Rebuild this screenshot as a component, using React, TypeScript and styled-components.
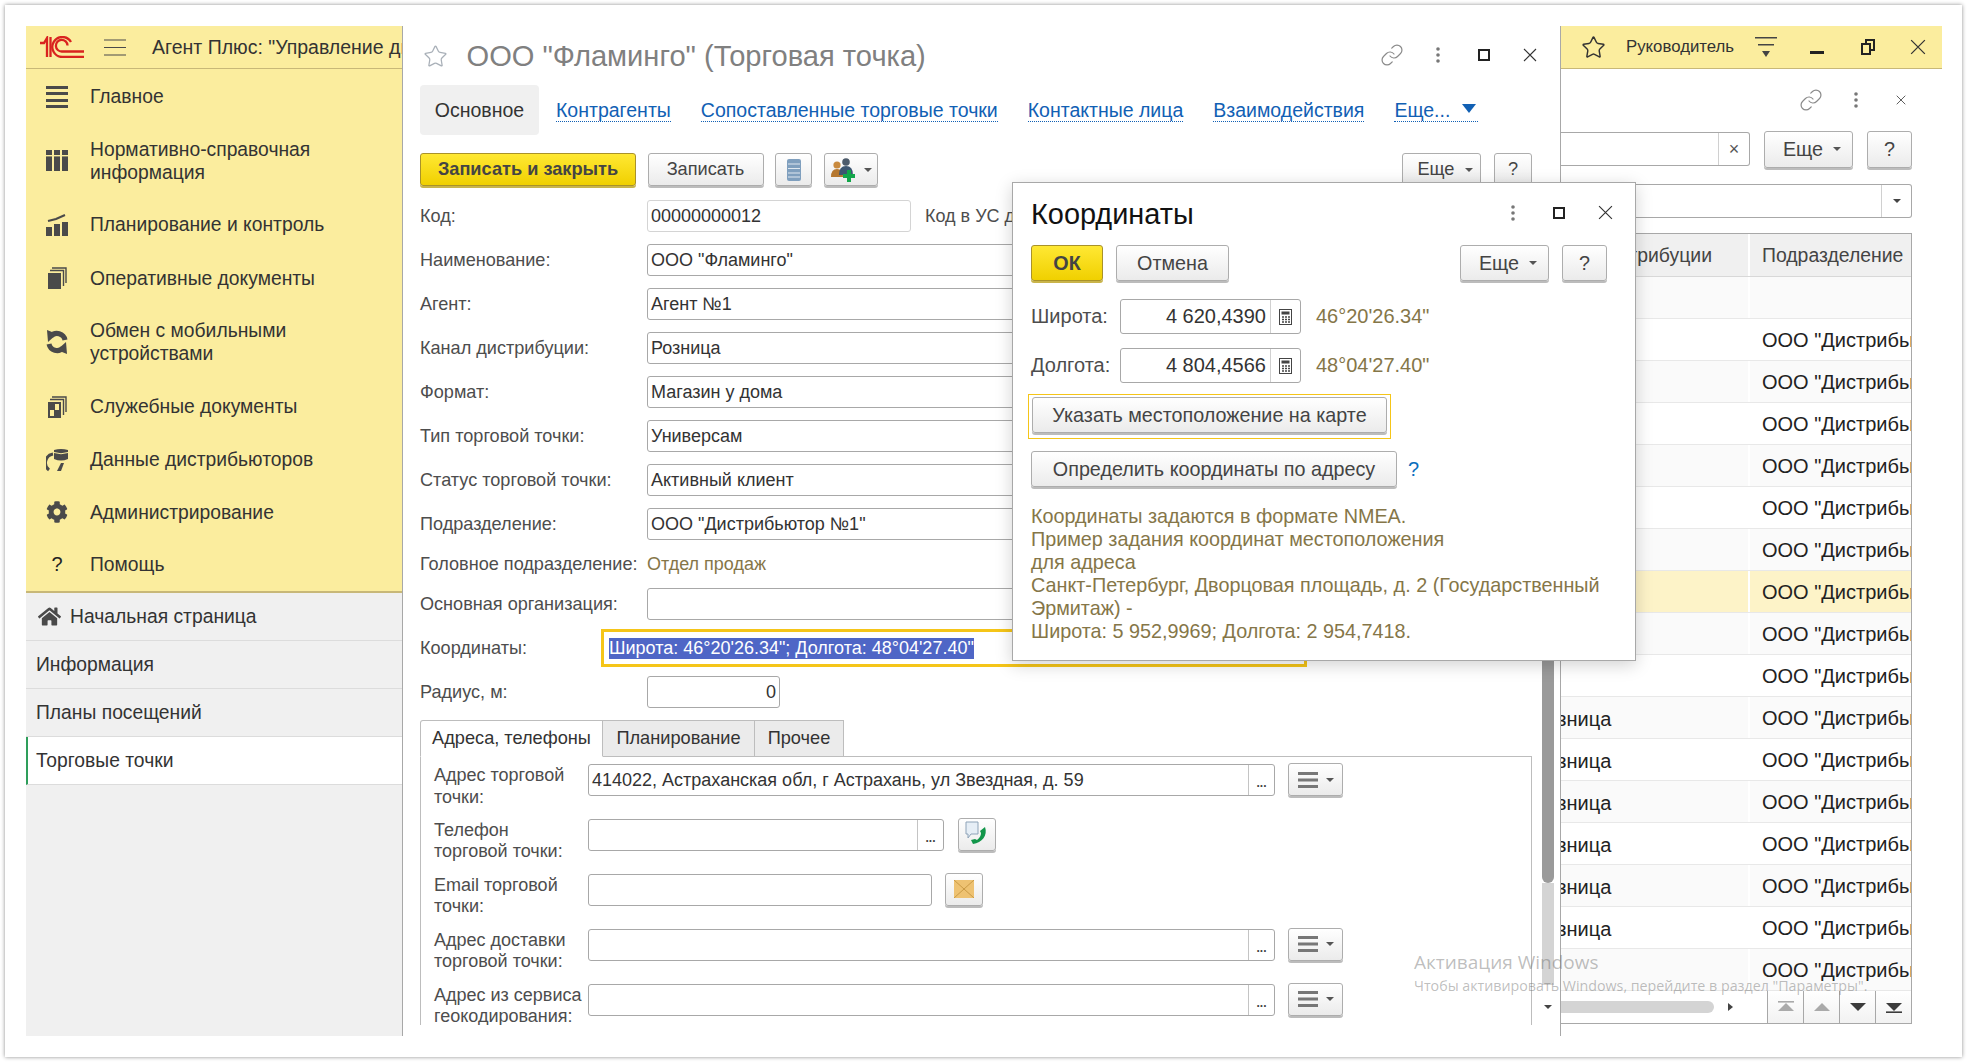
import React from 'react';
import styled, { createGlobalStyle } from 'styled-components';
import { Star, Link } from 'lucide-react';
import { FaHome, FaCog } from 'react-icons/fa';

const GlobalStyle = createGlobalStyle`
    html, body {
        margin: 0;
        padding: 0;
        background: #fff;
    }
    body {
        width: 1967px;
        height: 1063px;
        overflow: hidden;
        font-family: "Liberation Sans", Arial, sans-serif;
        font-size: 18px;
        color: #333;
    }
    * {
        box-sizing: border-box;
    }
`;

const menu = [
    { title: ['Главное'], icon: 'main' },
    { title: ['Нормативно-справочная', 'информация'], icon: 'refs' },
    { title: ['Планирование и контроль'], icon: 'plan' },
    { title: ['Оперативные документы'], icon: 'docs' },
    { title: ['Обмен с мобильными', 'устройствами'], icon: 'sync' },
    { title: ['Служебные документы'], icon: 'service' },
    { title: ['Данные дистрибьюторов'], icon: 'dist' },
    { title: ['Администрирование'], icon: 'gear' },
    { title: ['Помощь'], icon: 'help' },
];

const MenuIcon = ({ name }: { name: string }) => {
    if (name === 'gear') return <FaCog size={22} color="#4a4a4a" />;
    if (name === 'help') return <HelpMark>?</HelpMark>;
    return (
        <svg width="22" height="24" viewBox="0 0 22 24" fill="#4a4a4a">
            {name === 'main' && (
                <>
                    <rect x="0" y="1" width="22" height="3" />
                    <rect x="0" y="7" width="22" height="3" />
                    <rect x="0" y="14" width="22" height="3" />
                    <rect x="0" y="20" width="22" height="3" />
                </>
            )}
            {name === 'refs' && (
                <>
                    <rect x="0" y="1" width="6" height="21" />
                    <rect x="8" y="1" width="6" height="21" />
                    <rect x="16" y="1" width="6" height="21" />
                    <rect x="0" y="6" width="22" height="1.4" fill="#fbed9e" />
                </>
            )}
            {name === 'plan' && (
                <>
                    <rect x="0" y="14" width="6" height="9" />
                    <rect x="8" y="11" width="6" height="12" />
                    <rect x="16" y="9" width="6" height="14" />
                    <path d="M2 8 L10 6 L19 2" stroke="#4a4a4a" strokeWidth="2" fill="none" />
                </>
            )}
            {name === 'docs' && (
                <>
                    <path d="M6 2 H20 V17" stroke="#4a4a4a" strokeWidth="1.4" fill="none" />
                    <path d="M4 4.5 H17.5 V20" stroke="#4a4a4a" strokeWidth="1.4" fill="none" />
                    <rect x="2" y="7" width="13" height="16" />
                </>
            )}
            {name === 'sync' && (
                <>
                    <path d="M19 10 A8.2 8.2 0 0 0 5 6 M3 14 A8.2 8.2 0 0 0 17 18" stroke="#4a4a4a" strokeWidth="5" fill="none" />
                    <path d="M1 0 L11 4 L2 12 Z M21 24 L11 20 L20 12 Z" />
                </>
            )}
            {name === 'service' && (
                <>
                    <path d="M6 2 H20 V17" stroke="#4a4a4a" strokeWidth="1.4" fill="none" />
                    <path d="M4 4.5 H17.5 V20" stroke="#4a4a4a" strokeWidth="1.4" fill="none" />
                    <rect x="2" y="7" width="13" height="16" />
                    <rect x="9" y="9" width="4" height="6" fill="#fbed9e" />
                    <rect x="4" y="15" width="4" height="6" fill="#fbed9e" />
                </>
            )}
            {name === 'dist' && (
                <>
                    <path d="M7 6 A9 9 0 0 0 3 22" stroke="#4a4a4a" strokeWidth="3" fill="none" />
                    <path d="M8 2 Q15 0 22 2 V11 Q15 14 8 11 Z" />
                    <path d="M8 4.5 Q15 7 22 4.5" stroke="#fbed9e" strokeWidth="1" fill="none" />
                    <path d="M11 23 L15 15 L18 15 L15 23 Z" />
                </>
            )}
        </svg>
    );
};

const Logo = () => (
    <svg width="44" height="22" viewBox="0 0 44 22" fill="none" stroke="#d9231f" strokeWidth="2.3">
        <path d="M0 7 H4 L7 2 V21" />
        <path d="M10.5 1 V21" />
        <path d="M31 6 A10 10 0 1 0 22 21 H44" />
        <path d="M27.5 9.5 A5.8 5.8 0 1 0 22 15.5 H44" />
    </svg>
);

const Burger = () => (
    <svg width="22" height="17" viewBox="0 0 22 17" stroke="#4a4a4a" strokeWidth="1.2">
        <path d="M0 1 H22 M0 8.5 H22 M0 16 H22" />
    </svg>
);

const Cross = ({ size = 14 }: { size?: number }) => (
    <svg width={size} height={size} viewBox="0 0 14 14" stroke="#333" strokeWidth="1.1">
        <path d="M1 1 L13 13 M13 1 L1 13" />
    </svg>
);

const Maximize = () => (
    <svg width="12" height="12" viewBox="0 0 12 12" fill="none" stroke="#222" strokeWidth="2">
        <rect x="1" y="1" width="10" height="10" />
    </svg>
);

const Kebab = () => (
    <svg width="4" height="16" viewBox="0 0 4 16" fill="#777">
        <circle cx="2" cy="2" r="1.8" />
        <circle cx="2" cy="8" r="1.8" />
        <circle cx="2" cy="14" r="1.8" />
    </svg>
);

const Calc = () => (
    <svg width="13" height="16" viewBox="0 0 13 16">
        <rect x="0.5" y="0.5" width="12" height="15" fill="#fff" stroke="#444" />
        <rect x="2.5" y="2.5" width="8" height="3" fill="#444" />
        <path d="M3 8 H5 M6 8 H8 M9 8 H11 M3 10.5 H5 M6 10.5 H8 M9 10.5 H11 M3 13 H5 M6 13 H8 M9 13 H11" stroke="#444" strokeWidth="1.4" />
    </svg>
);

const ListLines = () => (
    <svg width="20" height="16" viewBox="0 0 20 16" fill="#777">
        <rect x="0" y="0" width="20" height="3" />
        <rect x="0" y="6.5" width="20" height="3" />
        <rect x="0" y="13" width="20" height="3" />
    </svg>
);

const Arrow = styled.span<{ $color?: string }>`
    display: inline-block;
    width: 0;
    height: 0;
    border-left: 4px solid transparent;
    border-right: 4px solid transparent;
    border-top: 4px solid ${p => p.$color || '#555'};
`;

const MoreArrow = styled(Arrow)`
    margin: 0 -7px 0 2px;
`;

const DbIcon = () => (
    <svg width="14" height="22" viewBox="0 0 14 22">
        <rect x="0" y="0" width="14" height="22" rx="2" fill="#7f9fbe" />
        <path d="M1 5 H13 M1 9.5 H13 M1 14 H13 M1 18 H13" stroke="#dfe8f0" strokeWidth="1.2" />
    </svg>
);

const PeopleIcon = () => (
    <svg width="26" height="26" viewBox="0 0 26 26">
        <circle cx="7" cy="8" r="3.6" fill="#c98a3e" />
        <path d="M1 20 Q1 12 7 12 Q13 12 13 20 Z" fill="#b5772f" />
        <circle cx="16" cy="5" r="3.8" fill="#4d5b6b" />
        <path d="M9 18 Q9 9 16 9 Q23 9 23 18 Z" fill="#3d5671" />
        <path d="M17 13 H21 V17 H25 V21 H21 V25 H17 V21 H13 V17 H17 Z" fill="#12a74a" />
    </svg>
);

const PhoneIcon = () => (
    <svg width="26" height="26" viewBox="0 0 26 26">
        <path d="M2 1 H14 V13 H7 L4 17 V13 H2 Z" fill="#e6eef6" stroke="#8ea3b8" />
        <path d="M21 6 C24 14 18 22 9 23 L7 19 L11 18 L13 19 C16 17 17 14 17 12 L16 10 Z" fill="#12964a" />
    </svg>
);

const MailIcon = () => (
    <svg width="20" height="18" viewBox="0 0 20 18">
        <rect x="0" y="0" width="20" height="18" fill="#eec272" />
        <path d="M0 0 L10 9 L20 0 M0 18 L10 9 L20 18" stroke="#c99a45" fill="none" />
    </svg>
);

const NavIcon = ({ up, bar, color }: { up?: boolean; bar?: boolean; color: string }) => (
    <svg width="16" height="12" viewBox="0 0 16 12" fill={color}>
        {up ? <path d="M8 2 L16 10 H0 Z" /> : <path d="M8 10 L0 2 H16 Z" />}
        {bar && (up ? <rect x="0" y="0" width="16" height="1.6" /> : <rect x="0" y="10.4" width="16" height="1.6" />)}
    </svg>
);

const fields = [
    { label: 'Наименование:', value: 'ООО "Фламинго"' },
    { label: 'Агент:', value: 'Агент №1' },
    { label: 'Канал дистрибуции:', value: 'Розница' },
    { label: 'Формат:', value: 'Магазин у дома' },
    { label: 'Тип торговой точки:', value: 'Универсам' },
    { label: 'Статус торговой точки:', value: 'Активный клиент' },
    { label: 'Подразделение:', value: 'ООО "Дистрибьютор №1"' },
];

const addressRows = [
    { label: ['Адрес торговой', 'точки:'], value: '414022, Астраханская обл, г Астрахань, ул Звездная, д. 59', width: 687, pick: true, kind: 'menu' },
    { label: ['Телефон', 'торговой точки:'], value: '', width: 356, pick: true, kind: 'phone' },
    { label: ['Email торговой', 'точки:'], value: '', width: 344, pick: false, kind: 'mail' },
    { label: ['Адрес доставки', 'торговой точки:'], value: '', width: 687, pick: true, kind: 'menu' },
    { label: ['Адрес из сервиса', 'геокодирования:'], value: '', width: 687, pick: true, kind: 'menu' },
];

const tableRows = Array.from({ length: 17 }, (_, i) => ({
    channel: i >= 10 && i <= 15 ? 'Розница' : '',
    unit: i === 0 ? '' : 'ООО "Дистрибьютор №1"',
    current: i === 7,
}));

export default function App() {
    return (
        <>
            <GlobalStyle />
            <Card>
                <Screen>
                    <Sidebar>
                        <SideHeader>
                            <LogoSlot><Logo /></LogoSlot>
                            <BurgerSlot><Burger /></BurgerSlot>
                            <AppTitle>Агент Плюс: "Управление дистрибуцией"</AppTitle>
                        </SideHeader>
                        <Menu>
                            {menu.map(item => (
                                <MenuItem key={item.icon}>
                                    <MenuGlyph><MenuIcon name={item.icon} /></MenuGlyph>
                                    <div>
                                        {item.title.map(line => <div key={line}>{line}</div>)}
                                    </div>
                                </MenuItem>
                            ))}
                        </Menu>
                        <OpenList>
                            <OpenItem><FaHome size={23} color="#4a4a4a" /><span>Начальная страница</span></OpenItem>
                            <OpenItem>Информация</OpenItem>
                            <OpenItem>Планы посещений</OpenItem>
                            <OpenItem $active>Торговые точки</OpenItem>
                        </OpenList>
                    </Sidebar>

                    <FormWindow>
                        <FormMain>
                            <TitleRow>
                                <StarSlot><Star size={25} color="#a9b0b8" strokeWidth={1.2} /></StarSlot>
                                <FormTitle>ООО "Фламинго" (Торговая точка)</FormTitle>
                                <TitleTools>
                                    <ToolSlot><Link size={24} color="#8a8a8a" strokeWidth={1.2} /></ToolSlot>
                                    <ToolSlot><Kebab /></ToolSlot>
                                    <ToolSlot><Maximize /></ToolSlot>
                                    <ToolSlot><Cross /></ToolSlot>
                                </TitleTools>
                            </TitleRow>

                            <TabsRow>
                                <CurrentTab>Основное</CurrentTab>
                                <TabLink>Контрагенты</TabLink>
                                <TabLink>Сопоставленные торговые точки</TabLink>
                                <TabLink>Контактные лица</TabLink>
                                <TabLink>Взаимодействия</TabLink>
                                <TabLink $more>Еще...<TabArrow /></TabLink>
                            </TabsRow>

                            <Toolbar>
                                <Btn $primary $w={216} $h={33}>Записать и закрыть</Btn>
                                <Btn $w={116} $h={33}>Записать</Btn>
                                <Btn $w={37} $h={33}><DbIcon /></Btn>
                                <Btn $w={54} $h={33}><PeopleIcon /><Arrow /></Btn>
                                <RightTools>
                                    <Btn $w={79} $h={33}>Еще<MoreArrow /></Btn>
                                    <Btn $w={38} $h={33}>?</Btn>
                                </RightTools>
                            </Toolbar>

                            <Fields>
                                <FieldRow>
                                    <FieldLabel>Код:</FieldLabel>
                                    <Input $w={264} $light>00000000012</Input>
                                    <SideCaption>Код в УС дистрибьютора:</SideCaption>
                                </FieldRow>
                                {fields.map(f => (
                                    <FieldRow key={f.label}>
                                        <FieldLabel>{f.label}</FieldLabel>
                                        <Input $w={760}>{f.value}</Input>
                                    </FieldRow>
                                ))}
                                <TextRow>
                                    <FieldLabel>Головное подразделение:</FieldLabel>
                                    <ReadValue>Отдел продаж</ReadValue>
                                </TextRow>
                                <FieldRow>
                                    <FieldLabel>Основная организация:</FieldLabel>
                                    <Input $w={760} />
                                </FieldRow>
                                <CoordRow>
                                    <FieldLabel $w={181}>Координаты:</FieldLabel>
                                    <FocusBox><Selected>Широта: 46°20'26.34"; Долгота: 48°04'27.40"</Selected></FocusBox>
                                </CoordRow>
                                <FieldRow>
                                    <FieldLabel>Радиус, м:</FieldLabel>
                                    <Input $w={133} $right>0</Input>
                                </FieldRow>
                            </Fields>

                            <TabPanel>
                                <PanelTabs>
                                    <PanelTab $active $w={183}>Адреса, телефоны</PanelTab>
                                    <PanelTab $w={152}>Планирование</PanelTab>
                                    <PanelTab $w={89}>Прочее</PanelTab>
                                    <PanelFill />
                                </PanelTabs>
                                <PanelBody>
                                    {addressRows.map(row => (
                                        <AddrRow key={row.label[0]}>
                                            <AddrLabel>
                                                {row.label.map(line => <div key={line}>{line}</div>)}
                                            </AddrLabel>
                                            <Input $w={row.width}>
                                                <InputText>{row.value}</InputText>
                                                {row.pick && <PickBtn>...</PickBtn>}
                                            </Input>
                                            {row.kind === 'menu' && <Btn $w={55} $h={33} $ml={13}><ListLines /><Arrow /></Btn>}
                                            {row.kind === 'phone' && <Btn $w={38} $h={33} $ml={14}><PhoneIcon /></Btn>}
                                            {row.kind === 'mail' && <Btn $w={38} $h={33} $ml={13}><MailIcon /></Btn>}
                                        </AddrRow>
                                    ))}
                                </PanelBody>
                            </TabPanel>
                        </FormMain>
                        <ScrollCol>
                            <ScrollThumb />
                            <ScrollTrack />
                            <ScrollEnd><Arrow $color="#444" /></ScrollEnd>
                        </ScrollCol>
                    </FormWindow>

                    <ListPane>
                        <ListHeader>
                            <HeaderStar><Star size={25} color="#333" strokeWidth={1.4} /></HeaderStar>
                            <UserName>Руководитель</UserName>
                            <FilterSlot>
                                <svg width="22" height="22" viewBox="0 0 22 22" fill="#444">
                                    <path d="M0 1 H22 V2.4 H0 Z M3 8 H19 V9.4 H3 Z" />
                                    <path d="M7 15 H15 L11 21 Z" />
                                </svg>
                            </FilterSlot>
                            <WinSlot $w={46.5}>
                                <svg width="14" height="14" viewBox="0 0 14 14" fill="#222"><rect x="0" y="11" width="14" height="3" /></svg>
                            </WinSlot>
                            <WinSlot $w={51}>
                                <svg width="14" height="16" viewBox="0 0 14 16" fill="none" stroke="#222" strokeWidth="2">
                                    <rect x="1" y="5" width="8" height="10" />
                                    <path d="M5 4 V1 H13 V11 H10" />
                                </svg>
                            </WinSlot>
                            <WinSlot $w={51.5}><Cross size={16} /></WinSlot>
                        </ListHeader>
                        <ListBody>
                            <ListTools>
                                <ToolSlot><Link size={24} color="#8a8a8a" strokeWidth={1.2} /></ToolSlot>
                                <ToolSlot><Kebab /></ToolSlot>
                                <ToolSlot><Cross size={10} /></ToolSlot>
                            </ListTools>
                            <SearchRow>
                                <SearchBox><ClearBtn>×</ClearBtn></SearchBox>
                                <Btn $w={89} $h={37} $big>Еще<MoreArrow /></Btn>
                                <Btn $w={45} $h={37} $big>?</Btn>
                            </SearchRow>
                            <ComboBox><ComboBtn><Arrow $color="#444" /></ComboBtn></ComboBox>
                            <Table>
                                <TableHead>
                                    <HeadCell $end>Канал дистрибуции</HeadCell>
                                    <HeadCell>Подразделение</HeadCell>
                                </TableHead>
                                {tableRows.map((r, i) => (
                                    <TableRow key={i} $odd={i % 2 === 0} $current={r.current}>
                                        <ChannelCell>{r.channel}</ChannelCell>
                                        <UnitCell>{r.unit}</UnitCell>
                                    </TableRow>
                                ))}
                                <TableFoot>
                                    <HScroll>
                                        <HThumb />
                                        <HArrow />
                                    </HScroll>
                                    <NavBtn><NavIcon up bar color="#aaa" /></NavBtn>
                                    <NavBtn><NavIcon up color="#aaa" /></NavBtn>
                                    <NavBtn><NavIcon color="#3c3c3c" /></NavBtn>
                                    <NavBtn><NavIcon bar color="#3c3c3c" /></NavBtn>
                                </TableFoot>
                            </Table>
                        </ListBody>
                    </ListPane>

                    <Dialog>
                        <DialogHead>
                            <DialogTitle>Координаты</DialogTitle>
                            <TitleTools>
                                <ToolSlot><Kebab /></ToolSlot>
                                <ToolSlot><Maximize /></ToolSlot>
                                <ToolSlot><Cross size={15} /></ToolSlot>
                            </TitleTools>
                        </DialogHead>
                        <DialogButtons>
                            <Btn $primary $w={72} $h={36} $big>ОК</Btn>
                            <Btn $w={113} $h={36} $big>Отмена</Btn>
                            <RightTools>
                                <Btn $w={89} $h={36} $big>Еще<MoreArrow /></Btn>
                                <Btn $w={45} $h={36} $big>?</Btn>
                            </RightTools>
                        </DialogButtons>
                        <GeoRow>
                            <GeoLabel>Широта:</GeoLabel>
                            <GeoInput>
                                <GeoValue>4 620,4390</GeoValue>
                                <CalcBtn><Calc /></CalcBtn>
                            </GeoInput>
                            <GeoHint>46°20'26.34"</GeoHint>
                        </GeoRow>
                        <GeoRow>
                            <GeoLabel>Долгота:</GeoLabel>
                            <GeoInput>
                                <GeoValue>4 804,4566</GeoValue>
                                <CalcBtn><Calc /></CalcBtn>
                            </GeoInput>
                            <GeoHint>48°04'27.40"</GeoHint>
                        </GeoRow>
                        <FocusFrame>
                            <Btn $w={355} $h={36} $big>Указать местоположение на карте</Btn>
                        </FocusFrame>
                        <AddressRow>
                            <Btn $w={366} $h={36} $big>Определить координаты по адресу</Btn>
                            <BlueHelp>?</BlueHelp>
                        </AddressRow>
                        <Info>
                            Координаты задаются в формате NMEA.<br />
                            Пример задания координат местоположения<br />
                            для адреса<br />
                            Санкт-Петербург, Дворцовая площадь, д. 2 (Государственный<br />
                            Эрмитаж) -<br />
                            Широта: 5 952,9969; Долгота: 2 954,7418.
                        </Info>
                    </Dialog>

                    <Watermark>
                        <WatermarkTitle>Активация Windows</WatermarkTitle>
                        <WatermarkText>Чтобы активировать Windows, перейдите в раздел "Параметры".</WatermarkText>
                    </Watermark>
                </Screen>
            </Card>
        </>
    );
}

const Card = styled.div`
    width: 1957px;
    height: 1052px;
    margin: 5px 0 0 5px;
    padding: 21px;
    background: #fff;
    box-shadow: 0 0 4px rgba(0, 0, 0, 0.45);
`;

const Screen = styled.div`
    position: relative;
    display: flex;
    width: 1916px;
    height: 1010px;
    overflow: hidden;
`;

const Sidebar = styled.aside`
    display: flex;
    flex-direction: column;
    flex: 0 0 376px;
    min-width: 0;
    overflow: hidden;
    background: #f0f0f0;
`;

const SideHeader = styled.div`
    display: flex;
    align-items: center;
    height: 43px;
    flex: none;
    padding-left: 14px;
    background: #fbed9e;
    border-bottom: 1px solid #c8b878;
    overflow: hidden;
    white-space: nowrap;
`;

const LogoSlot = styled.div`
    display: flex;
    flex: none;
`;

const BurgerSlot = styled.div`
    display: flex;
    flex: none;
    margin: 0 26px 0 20px;
`;

const AppTitle = styled.div`
    flex: none;
    font-size: 19.5px;
    color: #333;
`;

const Menu = styled.nav`
    flex: none;
    height: 524px;
    padding-top: 1px;
    background: #fbed9e;
    border-bottom: 2px solid #c8b878;
`;

const MenuItem = styled.div`
    display: flex;
    align-items: center;
    padding: 14.6px 0 14.6px 20px;
    line-height: 23px;
    font-size: 19.3px;
    color: #333;
`;

const MenuGlyph = styled.div`
    display: flex;
    align-items: center;
    justify-content: center;
    flex: 0 0 22px;
    margin-right: 22px;
`;

const HelpMark = styled.span`
    font-size: 20px;
    color: #222;
`;

const OpenList = styled.div`
    display: flex;
    flex-direction: column;
`;

const OpenItem = styled.div<{ $active?: boolean }>`
    display: flex;
    align-items: center;
    gap: 9px;
    height: 48px;
    padding-left: ${p => (p.$active ? '8px' : '10px')};
    font-size: 19.3px;
    color: #333;
    background: ${p => (p.$active ? '#fff' : 'transparent')};
    border-bottom: 1px solid #dcdcdc;
    border-left: ${p => (p.$active ? '2px solid #2e9e5b' : 'none')};

    & > svg {
        margin-left: 2px;
    }
`;

const FormWindow = styled.main`
    display: flex;
    flex: 0 0 1159px;
    min-width: 0;
    padding-left: 17px;
    background: #fff;
    border-left: 1px solid #a8a8a8;
    border-right: 1px solid #a8a8a8;
`;

const FormMain = styled.div`
    display: flex;
    flex-direction: column;
    flex: 0 0 1112px;
    min-width: 0;
`;

const TitleRow = styled.div`
    display: flex;
    align-items: center;
    height: 59px;
    flex: none;
    padding-top: 2px;
`;

const StarSlot = styled.div`
    display: flex;
    margin: 0 18.5px 0 3px;
`;

const FormTitle = styled.h1`
    margin: 0;
    font-size: 29.1px;
    font-weight: 400;
    color: #808080;
    white-space: nowrap;
`;

const TitleTools = styled.div`
    display: flex;
    align-items: center;
    gap: 22px;
    margin: -3px -10px 0 auto;
`;

const ToolSlot = styled.div`
    display: flex;
    align-items: center;
    justify-content: center;
    width: 24px;
    height: 24px;
`;

const TabsRow = styled.div`
    display: flex;
    align-items: center;
    gap: 30px;
    height: 50px;
    flex: none;
    padding-top: 1px;
`;

const CurrentTab = styled.div`
    display: flex;
    align-items: center;
    justify-content: center;
    width: 119px;
    height: 50px;
    margin: -1px -13px 0 0;
    padding-top: 1px;
    font-size: 19.5px;
    color: #333;
    background: #f0f0f0;
    border-radius: 4px;
`;

const TabLink = styled.a<{ $more?: boolean }>`
    display: inline-flex;
    align-items: center;
    font-size: 19.5px;
    line-height: 21px;
    color: #1160b4;
    border-bottom: 1px dotted #1160b4;
    white-space: nowrap;
`;

const TabArrow = styled.span`
    width: 0;
    height: 0;
    margin: 0 2px 4px 12px;
    border-left: 7px solid transparent;
    border-right: 7px solid transparent;
    border-top: 9px solid #1160b4;
`;

const Toolbar = styled.div`
    display: flex;
    align-items: flex-start;
    gap: 11.5px;
    height: 34px;
    flex: none;
    margin-top: 18px;
`;

const RightTools = styled.div`
    display: flex;
    gap: 13px;
    margin-left: auto;
`;

const Btn = styled.button<{ $w: number; $h: number; $primary?: boolean; $ml?: number; $big?: boolean }>`
    display: inline-flex;
    align-items: center;
    justify-content: center;
    gap: 8px;
    flex: none;
    width: ${p => p.$w}px;
    height: ${p => p.$h}px;
    margin-left: ${p => p.$ml || 0}px;
    padding: 0;
    font-family: inherit;
    font-size: ${p => (p.$big ? '19.75px' : '18.2px')};
    font-weight: ${p => (p.$primary ? 700 : 400)};
    color: #444;
    white-space: nowrap;
    background: ${p => (p.$primary ? 'linear-gradient(#ffe833, #f0d000)' : 'linear-gradient(#ffffff, #ebebeb)')};
    border: 1px solid ${p => (p.$primary ? '#a9922a' : '#adadad')};
    border-radius: 3px;
    box-shadow: 0 2px 0 ${p => (p.$primary ? '#c9b44a' : '#bcbcbc')};
`;

const Fields = styled.div`
    display: flex;
    flex-direction: column;
    margin-top: 13px;
`;

const FieldRow = styled.div`
    display: flex;
    align-items: center;
    height: 32px;
    margin-bottom: 12px;
    white-space: nowrap;
`;

const TextRow = styled(FieldRow)`
    height: 24px;
`;

const CoordRow = styled(FieldRow)`
    height: 38px;
    margin: -3px 0 9px;
`;

const FieldLabel = styled.div<{ $w?: number }>`
    flex: 0 0 ${p => p.$w || 227}px;
    font-size: 18.1px;
    color: #4d4d4d;
`;

const Input = styled.div<{ $w: number; $light?: boolean; $right?: boolean }>`
    display: flex;
    align-items: center;
    flex: none;
    justify-content: ${p => (p.$right ? 'flex-end' : 'flex-start')};
    width: ${p => p.$w}px;
    height: 32px;
    padding: 0 3px;
    font-size: 18px;
    color: #333;
    background: #fff;
    border: 1px solid ${p => (p.$light ? '#d4d4d4' : '#a8a8a8')};
    border-radius: 3px;
    overflow: hidden;
    white-space: nowrap;
`;

const InputText = styled.span`
    flex: 1;
`;

const PickBtn = styled.span`
    display: flex;
    align-items: flex-end;
    justify-content: center;
    flex: 0 0 26px;
    height: 30px;
    margin-right: -3px;
    padding-bottom: 6px;
    font-size: 12px;
    font-weight: 700;
    line-height: 12px;
    color: #444;
    border-left: 1px solid #c4c4c4;
`;

const SideCaption = styled.div`
    margin-left: 14px;
    font-size: 18px;
    color: #4d4d4d;
`;

const ReadValue = styled.div`
    font-size: 18px;
    color: #857648;
`;

const FocusBox = styled.div`
    display: flex;
    align-items: center;
    width: 706px;
    height: 38px;
    padding-left: 5px;
    border: 3px solid #f5c518;
`;

const Selected = styled.span`
    padding: 1px 0;
    font-size: 18px;
    line-height: 19px;
    color: #fff;
    background: #4f66c6;
`;

const TabPanel = styled.section`
    display: flex;
    flex-direction: column;
    height: 305px;
    flex: none;
    overflow: hidden;
`;

const PanelTabs = styled.div`
    display: flex;
    height: 37px;
    flex: none;
`;

const PanelTab = styled.div<{ $active?: boolean; $w: number }>`
    display: flex;
    align-items: center;
    justify-content: center;
    width: ${p => p.$w}px;
    font-size: 18.2px;
    color: #333;
    background: ${p => (p.$active ? '#fff' : '#ebebeb')};
    border: 1px solid #bdbdbd;
    border-left-width: ${p => (p.$active ? 1 : 0)}px;
    border-bottom-color: ${p => (p.$active ? '#fff' : '#bdbdbd')};
    border-radius: ${p => (p.$active ? '3px 0 0 0' : '0')};
`;

const PanelFill = styled.div`
    flex: 1;
    border-bottom: 1px solid #bdbdbd;
`;

const PanelBody = styled.div`
    flex: 1;
    padding: 7px 0 0 13px;
    border-left: 1px solid #bdbdbd;
    border-right: 1px solid #bdbdbd;
`;

const AddrRow = styled.div`
    display: flex;
    align-items: flex-start;
    height: 54.9px;

    & > button {
        margin-top: -1px;
    }
`;

const AddrLabel = styled.div`
    flex: 0 0 154px;
    margin-top: 1px;
    font-size: 18px;
    line-height: 21.5px;
    color: #4d4d4d;
    white-space: nowrap;
`;

const ScrollCol = styled.div`
    display: flex;
    flex-direction: column;
    flex: 0 0 12px;
    margin-left: 10px;
    padding-top: 614px;
`;

const ScrollThumb = styled.div`
    height: 243px;
    background: #9a9a9a;
    border-radius: 0 0 6px 6px;
`;

const ScrollTrack = styled.div`
    height: 102px;
    background: #d4d4d4;
`;

const ScrollEnd = styled.div`
    display: flex;
    justify-content: center;
    margin-top: 20px;
`;

const ListPane = styled.section`
    display: flex;
    flex-direction: column;
    flex: 1;
    min-width: 0;
    background: #fff;
`;

const ListHeader = styled.div`
    display: flex;
    align-items: center;
    height: 43px;
    flex: none;
    background: #fbed9e;
    border-bottom: 1px solid #c8b878;
`;

const HeaderStar = styled.div`
    display: flex;
    margin-left: 20px;
`;

const UserName = styled.div`
    margin-left: 20px;
    font-size: 16.8px;
    color: #333;
    white-space: nowrap;
`;

const FilterSlot = styled.div`
    display: flex;
    margin-left: 21px;
`;

const WinSlot = styled.div<{ $w: number }>`
    display: flex;
    justify-content: flex-end;
    width: ${p => p.$w}px;
`;

const ListBody = styled.div`
    display: flex;
    flex-direction: column;
    flex: 1;
    min-height: 0;
    padding-right: 30px;
    overflow: hidden;
`;

const ListTools = styled.div`
    display: flex;
    align-items: center;
    justify-content: flex-end;
    gap: 21px;
    height: 61px;
    flex: none;
    margin-right: -1px;
`;

const SearchRow = styled.div`
    display: flex;
    align-items: center;
    gap: 14px;
    height: 38px;
    flex: none;
`;

const SearchBox = styled.div`
    display: flex;
    justify-content: flex-end;
    flex: 0 0 189px;
    height: 34px;
    border: 1px solid #a8a8a8;
    border-left: none;
    border-radius: 0 3px 3px 0;
`;

const ClearBtn = styled.div`
    display: flex;
    align-items: center;
    justify-content: center;
    width: 31px;
    font-size: 18px;
    color: #555;
    border-left: 1px solid #d0d0d0;
`;

const ComboBox = styled.div`
    display: flex;
    justify-content: flex-end;
    height: 34px;
    flex: none;
    margin-top: 16px;
    border: 1px solid #a8a8a8;
    border-left: none;
    border-radius: 0 3px 3px 0;
`;

const ComboBtn = styled.div`
    display: flex;
    align-items: center;
    justify-content: center;
    width: 30px;
    border-left: 1px solid #d0d0d0;
`;

const Table = styled.div`
    display: flex;
    flex-direction: column;
    height: 791px;
    flex: none;
    margin-top: 15px;
    border: 1px solid #a8a8a8;
    border-left: none;
`;

const TableHead = styled.div`
    display: grid;
    grid-template-columns: 189px minmax(0, 1fr);
    height: 43px;
    flex: none;
    background: #f0f0f0;
    border-bottom: 1px solid #d8d8d8;
`;

const HeadCell = styled.div<{ $end?: boolean }>`
    display: flex;
    align-items: center;
    justify-content: ${p => (p.$end ? 'flex-end' : 'flex-start')};
    padding: ${p => (p.$end ? '1px 36px 0 0' : '1px 0 0 12px')};
    font-size: 19.4px;
    color: #444;
    white-space: nowrap;
    overflow: hidden;
    border-right: ${p => (p.$end ? '2px solid #fff' : 'none')};
`;

const TableRow = styled.div<{ $odd?: boolean; $current?: boolean }>`
    display: grid;
    grid-template-columns: 189px minmax(0, 1fr);
    height: 42px;
    flex: none;
    background: ${p => (p.$current ? '#fdf3c8' : p.$odd ? '#fafafa' : '#fff')};
    border-bottom: 1px solid #e8e8e8;
    font-size: 20px;
    color: #222;
    white-space: nowrap;
`;

const ChannelCell = styled.div`
    display: block;
    padding-top: 2px;
    line-height: 40px;
    overflow: hidden;
    text-indent: -27px;
    border-right: 2px solid #fff;
`;

const UnitCell = styled.div`
    display: flex;
    align-items: center;
    padding: 2px 0 0 12px;
    overflow: hidden;
`;

const TableFoot = styled.div`
    display: flex;
    flex: 1;
`;

const HScroll = styled.div`
    display: flex;
    align-items: center;
    flex: 0 0 206px;
`;

const HThumb = styled.div`
    width: 153px;
    height: 12px;
    background: #d4d4d4;
    border-radius: 0 6px 6px 0;
`;

const HArrow = styled.div`
    margin-left: 14px;
    border-top: 4px solid transparent;
    border-bottom: 4px solid transparent;
    border-left: 5px solid #444;
`;

const NavBtn = styled.div`
    display: flex;
    align-items: center;
    justify-content: center;
    flex: 1;
    background: linear-gradient(#ffffff, #f2f2f2);
    border-left: 1px solid #a8a8a8;
`;

const Dialog = styled.div`
    position: absolute;
    left: 986px;
    top: 156px;
    width: 624px;
    height: 479px;
    padding: 0 28px 0 18px;
    background: #fff;
    border: 1px solid #a8a8a8;
    box-shadow: 0 4px 16px rgba(0, 0, 0, 0.18);
`;

const DialogHead = styled.div`
    display: flex;
    align-items: center;
    height: 62px;
`;

const DialogTitle = styled.div`
    font-size: 28.9px;
    color: #111;
`;

const DialogButtons = styled.div`
    display: flex;
    gap: 13px;
    height: 38px;
`;

const GeoRow = styled.div`
    display: flex;
    align-items: center;
    height: 35px;
    margin: 16px 0 -2px;
    font-size: 20px;
`;

const GeoLabel = styled.div`
    flex: 0 0 89px;
    color: #4d4d4d;
`;

const GeoInput = styled.div`
    display: flex;
    align-items: center;
    flex: 0 0 181px;
    height: 35px;
    border: 1px solid #a8a8a8;
    border-radius: 3px;
`;

const GeoValue = styled.div`
    flex: 1;
    padding-right: 4px;
    text-align: right;
    color: #333;
`;

const CalcBtn = styled.div`
    display: flex;
    align-items: center;
    justify-content: center;
    flex: 0 0 30px;
    height: 33px;
    border-left: 1px solid #d0d0d0;
`;

const GeoHint = styled.div`
    margin-left: 15px;
    color: #857648;
`;

const FocusFrame = styled.div`
    display: flex;
    width: 363px;
    height: 45px;
    margin: 13px 0 0 -3px;
    padding: 2px 3px;
    border: 1px solid #f5c518;
`;

const AddressRow = styled.div`
    display: flex;
    align-items: center;
    margin-top: 12px;
`;

const BlueHelp = styled.span`
    margin-left: 11px;
    font-size: 20px;
    color: #0a6ebd;
`;

const Info = styled.div`
    margin-top: 18px;
    font-size: 19.8px;
    line-height: 23px;
    color: #857648;
    white-space: nowrap;
`;

const Watermark = styled.div`
    position: absolute;
    left: 1388px;
    top: 922px;
    font-family: "Open Sans", sans-serif;
    color: rgba(110, 110, 110, 0.45);
    white-space: nowrap;
    pointer-events: none;
`;

const WatermarkTitle = styled.div`
    font-size: 19px;
    line-height: 28px;
`;

const WatermarkText = styled.div`
    font-size: 14.25px;
    line-height: 20px;
`;
